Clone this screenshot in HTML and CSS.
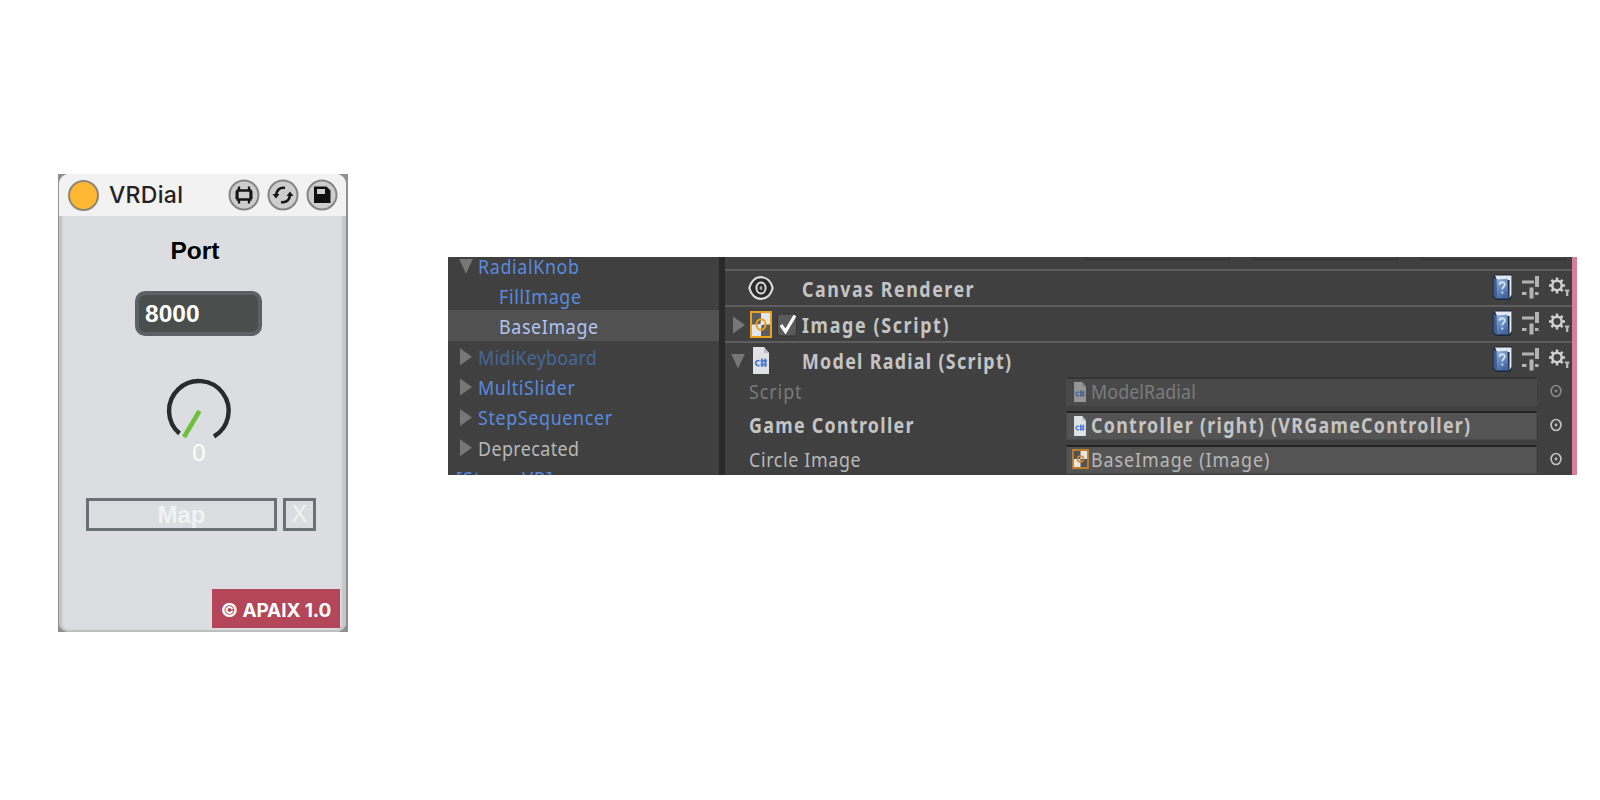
FILE: index.html
```html
<!DOCTYPE html>
<html lang="en">
<head>
<meta charset="utf-8">
<title>VRDial</title>
<link rel="stylesheet" href="styles.css">
</head>
<body>
<svg class="defs" width="0" height="0">
  <defs>
    <linearGradient id="bookfill" x1="0" y1="0" x2=".4" y2="1"><stop offset="0" stop-color="#93b3dd"/><stop offset=".6" stop-color="#6287bd"/><stop offset="1" stop-color="#44679f"/></linearGradient>
    <symbol id="book" viewBox="0 0 21 27">
      <path d="M.5 3 4 .5H20V22L18 26H4L.5 23Z" fill="#1d2739"/>
      <path d="M3 1.500H19.500V21L17.500 24V6H5Z" fill="#e3eaf4"/>
      <path d="M1.500 3 4.500 6V25L1.500 22Z" fill="#3d5f96"/>
      <path d="M4.500 5.500 15.500 4.500 16.500 24.500H4.500Z" fill="url(#bookfill)"/>
      <path d="M7.500 10.700C7.700 7.300 12.900 7.500 12.800 10.600 12.700 12.800 10.300 12.600 10.300 15.500M10.300 17.500V19.500" fill="none" stroke="#d4e2f5" stroke-width="1.900"/>
    </symbol>
    <symbol id="sliders" viewBox="0 0 18 24">
      <path d="M0 7H12M0 18.500H4.500M13 18.500H16.500" stroke="#b3b3b3" stroke-width="3.200" fill="none"/>
      <path d="M15 1V12M9.500 12.500V23.500" stroke="#b3b3b3" stroke-width="4" fill="none"/>
    </symbol>
    <symbol id="gear" viewBox="0 0 22 24">
      <circle cx="8" cy="9.500" r="4.700" fill="none" stroke="#cfcfcf" stroke-width="2.500"/>
      <path d="M8 4.500V1.500M8 14.500V17.500M3 9.500H0M13 9.500H16M4.500 6 2.400 3.900M11.500 6 13.600 3.900M4.500 13 2.400 15.100M11.500 13 13.600 15.100" stroke="#cfcfcf" stroke-width="2.500"/>
      <path d="M15.500 13.500H20.800L19.300 16.500V20H17V16.500Z" fill="#b9b9b9"/>
    </symbol>
    <symbol id="file" viewBox="0 0 16 27">
      <path d="M0 0H11L16 6V27H0Z" fill="#e0e2e5"/><path d="M11 0V6H16Z" fill="#b8bcc2"/>
      <path d="M6.500 14C2 12 .8 19.500 6.500 18.500M9 11.500V20M12.300 11.500V20M7.500 14H14M7.500 17.500H14" fill="none" stroke="#4b7ad0" stroke-width="1.800"/>
    </symbol>
    <symbol id="image" viewBox="0 0 22 27" preserveAspectRatio="none">
      <path d="M1 1H21V26H1Z" fill="#e2e6ee"/><path d="M1 1H11V13.500H1ZM11 13.500H21V26H11Z" fill="#5e5e60"/>
      <path d="M1 1H21V26H1Z" fill="none" stroke="#eba21d" stroke-width="2"/>
      <ellipse cx="11" cy="13.500" rx="4.500" ry="5.300" fill="none" stroke="#eba21d" stroke-width="2"/>
      <path d="M11 10.500V16.500M8.500 13.500H13.500" stroke="#e4e4e4"/>
    </symbol>
    <symbol id="sprite" viewBox="0 0 17 20">
      <path d="M1 1H16V19H1Z" fill="#565250"/><path d="M8.500 1H16V10H8.500ZM1 10H8.500V19H1Z" fill="#ece6df"/>
      <path d="M1 1H16V19H1Z" fill="none" stroke="#c07f2e" stroke-width="1.800"/>
      <circle cx="8.500" cy="10" r="3" fill="none" stroke="#d08a2c" stroke-width="1.600"/>
    </symbol>
    <symbol id="pick" viewBox="0 0 14 14"><ellipse cx="7" cy="7" rx="4.900" ry="5.500" fill="none" stroke="currentColor" stroke-width="1.700"/><circle cx="7" cy="7" r="1.400" fill="currentColor"/></symbol>
  </defs>
</svg>
<main class="page">
  <section class="device">
    <div class="device-body">
      <header class="device-head">
        <span class="power"></span><h1 class="device-name">VRDial</h1>
        <div class="device-tools">
          <svg width="32" height="32" viewBox="0 0 32 32"><circle class="tool" cx="16" cy="16" r="14.500"/><path d="M9.500 11.500H22.500V20.500H9.500ZM11 11V7.500M21 11V7.500M11 21V24.500M21 21V24.500" fill="none" stroke="#151515" stroke-width="2.300"/><path d="M8.500 12V20M23.500 12V20" stroke="#151515" stroke-width="2"/></svg>
          <svg width="32" height="32" viewBox="0 0 32 32"><circle class="tool" cx="16" cy="16" r="14.500"/><path d="M18 9C12.500 8 9.500 11.500 9 16M14 23C19.500 24 22.500 21 23 16" fill="none" stroke="#151515" stroke-width="2.600"/><path d="M5.500 15H12.500L9 19.500ZM26.500 17H19.500L23 12.500Z" fill="#151515"/></svg>
          <svg width="32" height="32" viewBox="0 0 32 32"><circle class="tool" cx="16" cy="16" r="14.500"/><path d="M8 7.500H20.500L24.500 11.500V24H8Z" fill="#101010"/><path d="M11 10H19V15H11Z" fill="#cfcfcf"/></svg>
        </div>
      </header>
      <div class="device-panel">
        <h2 class="port-label">Port</h2>
        <div class="port">8000</div>
        <svg class="knob" width="70" height="70" viewBox="0 0 70 70"><path d="M15.500 56.500A29.800 29.800 0 1 1 50 59.500" fill="none" stroke="#292a2b" stroke-width="4.400"/><path d="M35.500 34 20 60" stroke="#6dc13d" stroke-width="4.600" fill="none"/></svg>
        <div class="value">0</div>
        <div class="mapping"><div class="map">Map</div><div class="clear">X</div></div>
        <footer class="credit">© APAIX 1.0</footer>
      </div>
    </div>
  </section>

  <section class="editor">
    <ul class="tree">
      <li class="node"><i class="arrow down"></i><span class="txt">RadialKnob</span></li>
      <li class="node child"><span class="txt">FillImage</span></li>
      <li class="node child selected"><span class="txt">BaseImage</span></li>
      <li class="node dim"><i class="arrow"></i><span class="txt">MidiKeyboard</span></li>
      <li class="node"><i class="arrow"></i><span class="txt">MultiSlider</span></li>
      <li class="node"><i class="arrow"></i><span class="txt">StepSequencer</span></li>
      <li class="node plain"><i class="arrow"></i><span class="txt">Deprecated</span></li>
      <li class="node root"><span class="txt">[SteamVR]</span></li>
    </ul>
    <div class="inspector">
      <div class="stubs"><i></i><i></i><i></i></div>
      <div class="component">
        <div class="lead"><svg class="eye" width="26" height="26" viewBox="0 0 26 26"><path d="M1.300 13C3 6.500 7.500 2.200 13 2.200S23 6.500 24.700 13C23 19.500 18.500 23.800 13 23.800S3 19.500 1.300 13Z" fill="#2b2b2b" stroke="#dedede" stroke-width="2.200"/><ellipse cx="13" cy="13" rx="4.600" ry="5.500" fill="none" stroke="#dedede" stroke-width="2"/><ellipse cx="13" cy="13" rx="1.400" ry="2" fill="#aaa"/></svg></div>
        <span class="txt bold">Canvas Renderer</span>
        <div class="actions"><svg width="21" height="27"><use href="#book"/></svg><svg width="18" height="24"><use href="#sliders"/></svg><svg width="22" height="24"><use href="#gear"/></svg></div>
      </div>
      <div class="component">
        <div class="lead"><i class="arrow"></i><svg class="kind" width="22" height="27"><use href="#image"/></svg><svg class="check" width="20" height="24" viewBox="0 0 20 24"><rect x=".5" y="1" width="19" height="22" rx="3" fill="#5a5a5a" stroke="#333"/><path d="M4 12 8.500 18.500 18 2.500" fill="none" stroke="#fff" stroke-width="3.200"/></svg></div>
        <span class="txt bold w2">Image (Script)</span>
        <div class="actions"><svg width="21" height="27"><use href="#book"/></svg><svg width="18" height="24"><use href="#sliders"/></svg><svg width="22" height="24"><use href="#gear"/></svg></div>
      </div>
      <div class="component">
        <div class="lead"><i class="arrow down"></i><svg class="kind file" width="16" height="27"><use href="#file"/></svg></div>
        <span class="txt bold w3">Model Radial (Script)</span>
        <div class="actions"><svg width="21" height="27"><use href="#book"/></svg><svg width="18" height="24"><use href="#sliders"/></svg><svg width="22" height="24"><use href="#gear"/></svg></div>
      </div>
      <div class="props">
        <div class="prop disabled"><div class="label"><span class="txt wide">Script</span></div><div class="field"><svg width="12" height="20"><use href="#file"/></svg><span class="txt tight">ModelRadial</span></div><svg class="pick" width="14" height="14"><use href="#pick"/></svg></div>
        <div class="prop"><div class="label"><span class="txt bold w3">Game Controller</span></div><div class="field"><svg width="12" height="20"><use href="#file"/></svg><span class="txt bold w3">Controller (right) (VRGameController)</span></div><svg class="pick" width="14" height="14"><use href="#pick"/></svg></div>
        <div class="prop"><div class="label"><span class="txt">Circle Image</span></div><div class="field"><svg class="sprite" width="17" height="20"><use href="#sprite"/></svg><span class="txt wide">BaseImage (Image)</span></div><svg class="pick" width="14" height="14"><use href="#pick"/></svg></div>
      </div>
    </div>
    <div class="edge"></div>
  </section>
</main>
</body>
</html>
```

FILE: styles.css
```css
* { box-sizing: border-box; }
body { margin: 0; background: #fff; }
.defs { display: block; height: 0; }
.page { display: flex; align-items: flex-start; width: 1600px; height: 800px; overflow: hidden; }

/* Device */
.device { margin: 174px 0 0 58px; width: 290px; height: 458px; background: #909090; padding: 0 2px 0 1px; font-family: "Liberation Sans", Arial, sans-serif; }
.device-body { height: 458px; border-radius: 10px; overflow: hidden; background: #dcdde0; box-shadow: inset 4px 0 2px -1px #c3c3c3, inset -5px 0 2px -1px #c6c6c7, inset 0 -3px 1px -1px #bdbdbd; padding: 0 5px 3px 3px; }
.device-head { display: flex; align-items: center; height: 42px; background: #f2f2f2; margin: 0 -5px 0 -3px; padding: 0 9px 0 9px; }
.power { width: 31px; height: 31px; border-radius: 50%; background: #fdb733; border: 2px solid #8d8777; }
.device-name { margin: 0 0 0 10px; font: 500 23px/43px Inter, sans-serif; color: #222; letter-spacing: .3px; }
.device-tools { display: flex; gap: 7px; margin: 0 -1px 0 auto; }
.tool { fill: #cdcdcd; stroke: #858585; stroke-width: 2; }
.device-panel { display: flex; flex-direction: column; height: 413px; }
.port-label { margin: 20px 0 0 108.500px; font-size: 24.500px; line-height: 30px; font-weight: 700; color: #000; }
.port { margin: 25px 0 0 73px; width: 127px; height: 45px; border-radius: 10px; border: 4px solid #5d6165; background: #4a4e4d; color: #fff; font-weight: 700; font-size: 24.500px; line-height: 37px; padding-left: 6px; }
.knob { margin: 41px 0 0 102px; }
.value { margin: -8px 0 0 102px; width: 70px; text-align: center; font-size: 24px; line-height: 28px; color: #fbfffb; }
.mapping { display: flex; gap: 6px; margin: 31px 0 0 24px; }
.map, .clear { height: 33px; border: 3px solid #6b7076; color: #eff4f2; text-align: center; font-size: 24px; line-height: 27px; }
.map { width: 191px; font-weight: 700; }
.clear { width: 33px; font-size: 23px; }
.credit { margin: auto 1px 1px auto; width: 128px; height: 39px; background: #b34658; color: #fff; font: 700 19px/43px Inter, sans-serif; text-align: center; letter-spacing: -.1px; white-space: nowrap; }

/* Editor */
.editor { display: flex; margin: 257px 0 0 100px; width: 1129px; height: 218px; overflow: hidden; background: #404040; color: #b8b8b8; font-family: "Noto Sans", sans-serif; }
.txt { display: inline-block; flex: none; font-size: 20.500px; line-height: 30px; letter-spacing: .75px; transform: scaleX(.87); transform-origin: 0 50%; white-space: nowrap; }
.wide { letter-spacing: 1.100px; }
.tight { letter-spacing: .1px; }
.bold { font-weight: 700; letter-spacing: 1.750px; color: #c4c4c4; }
.w2 { letter-spacing: 1.900px; }
.w3 { letter-spacing: 1.500px; }
.arrow { flex: none; width: 12px; height: 17px; background: #777; clip-path: polygon(0 0, 100% 50%, 0 100%); }
.arrow.down { width: 14px; height: 15px; clip-path: polygon(0 0, 100% 0, 50% 100%); }
.tree { width: 271px; margin: -7.500px 0 0; padding: 0; list-style: none; color: #598adf; }
.node { display: flex; align-items: center; height: 30.350px; padding-left: 12px; }
.node .txt { position: relative; top: 1px; }
.node .arrow { margin: 2px 6px 0 0; }
.node .arrow.down { margin: 3px 5px 0 -1px; }
.node.child { padding-left: 51px; }
.selected { background: #515151; color: #b1c4f2; }
.dim { color: #466799; }
.dim .txt { letter-spacing: .3px; }
.plain { color: #b8b8b8; }
.plain .txt { letter-spacing: .5px; }
.root { padding-left: 8px; }
.root .txt { letter-spacing: 1.400px; }
.inspector { width: 853px; border-left: 6px solid #292929; }
.stubs { display: flex; gap: 23px; height: 11.500px; padding-left: 360px; }
.stubs i { width: 145px; height: 3px; border: solid #303030; border-width: 0 1px 1px; }
.component { display: flex; height: 36px; border-top: 2px solid #5d5d5d; }
.lead { display: flex; align-items: flex-start; width: 76.500px; padding-left: 8px; flex: none; }
.component .txt { margin-top: 3px; }
.eye { margin: 4px 0 0 15px; }
.lead .arrow { margin-top: 10px; }
.lead .arrow.down { margin: 11px 0 0 -2px; }
.kind { margin: 4px 0 0 5px; }
.kind.file { margin-left: 8px; }
.check { margin: 6px 0 0 5px; }
.actions { display: flex; gap: 9px; margin: 3px 1px 0 auto; align-items: flex-start; }
.actions svg:nth-child(2) { margin-top: 1px; }
.actions svg:nth-child(3) { margin-top: 2px; }
.props { display: flex; flex-direction: column; gap: 5px; }
.prop { display: flex; height: 29.200px; align-items: center; }
.label { width: 341px; padding-left: 24px; flex: none; display: flex; }
.field { display: flex; align-items: center; width: 471px; height: 29.200px; background: #545454; border: 1px solid #4a4a4a; border-top: 2px solid #232323; padding-left: 7px; overflow: hidden; flex: none; }
.field svg { margin-right: 5px; flex: none; }
.field .txt { margin-top: -2px; }
.field .sprite { margin: -1px 2px 0 -2px; }
.pick { margin-left: 12px; color: #bfbfbf; }
.disabled { color: #7b7b7b; }
.disabled .field { background: #494949; border-top-color: #333; }
.disabled .field svg { opacity: .5; }
.disabled .pick { color: #858585; }
.edge { width: 5px; background: #d87e9d; }
```
